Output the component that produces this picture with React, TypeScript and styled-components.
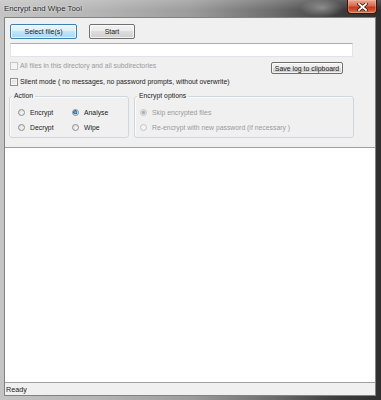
import React from "react";
import styled, { createGlobalStyle } from "styled-components";

const GlobalStyle = createGlobalStyle`
  html, body { margin: 0; padding: 0; width: 381px; height: 400px; overflow: hidden; background: #2b2b2b; }
  body { font-family: "Liberation Sans", Arial, sans-serif; }
  * { box-sizing: border-box; }
`;

const Window = styled.div`
  width: 381px;
  height: 400px;
  display: flex;
  flex-direction: column;
  padding: 0 5px 4px 4px;
  background:
    radial-gradient(ellipse 22px 9px at 322px 8px, rgba(255,255,255,0.35), rgba(255,255,255,0) 100%),
    linear-gradient(180deg, rgba(255,255,255,0.18) 0px, rgba(255,255,255,0) 10px),
    linear-gradient(90deg, #c4c4c4 0%, #b5b5b5 25%, #9c9c9c 50%, #6c6c6c 72%, #3e3e3e 88%, #2e2e2e 100%);
`;

const TitleBar = styled.div`
  height: 17px;
  display: flex;
  align-items: flex-start;
  justify-content: space-between;
`;

const Title = styled.span`
  margin-top: 4px;
  font-size: 7.8px;
  line-height: 9px;
  color: #151515;
  text-shadow: 0 0 3px rgba(255,255,255,0.85), 0 0 1px rgba(255,255,255,0.9);
`;

const CloseButton = styled.div`
  width: 30px;
  height: 14px;
  margin-right: -1px;
  display: flex;
  align-items: center;
  justify-content: center;
  border: 1px solid #3e1208;
  border-top: none;
  border-radius: 0 0 4px 4px;
  background: linear-gradient(180deg, #e9a996 0%, #d9694c 45%, #c5391c 55%, #cf5a38 85%, #e08b6a 100%);
  box-shadow: inset 0 0 0 1px rgba(255,200,180,0.35);
`;

const Client = styled.div`
  flex: 1;
  display: flex;
  flex-direction: column;
  background: #f0f0f0;
  border: 1px solid rgba(40,40,40,0.55);
`;

const TopPanel = styled.div`
  height: 129px;
  flex-shrink: 0;
  display: flex;
  flex-direction: column;
  padding: 6px 0 0 5px;
  font-size: 6.85px;
`;

const ButtonRow = styled.div`
  display: flex;
  gap: 12px;
`;

const PushButton = styled.button<{ $w: number; $h: number; $default?: boolean; $top?: number }>`
  width: ${(p) => p.$w}px;
  height: ${(p) => p.$h}px;
  margin-top: ${(p) => p.$top ?? 0}px;
  padding: 0;
  font-family: "Liberation Sans", Arial, sans-serif;
  font-size: 6.9px;
  color: #1a1a1a;
  border-radius: 2px;
  border: 1px solid ${(p) => (p.$default ? "#3c7fb1" : "#707070")};
  background: ${(p) =>
    p.$default
      ? "linear-gradient(180deg, #eaf6fd 0%, #d9f0fc 50%, #bee6fd 50%, #a7d9f5 100%)"
      : "linear-gradient(180deg, #f2f2f2 0%, #ebebeb 50%, #dddddd 50%, #cfcfcf 100%)"};
  box-shadow: inset 0 0 0 1px rgba(255,255,255,0.7);
  align-self: flex-start;
`;

const PathInput = styled.input`
  width: 343px;
  height: 14px;
  margin: 4px 0 0 0;
  padding: 0 2px;
  background: #fff;
  border: 1px solid #e2e3ea;
  border-top-color: #abadb3;
  outline: none;
  font-size: 6.85px;
`;

const OptionRow = styled.div`
  width: 333px;
  height: 13px;
  margin-top: 4px;
  display: flex;
  justify-content: space-between;
  align-items: flex-start;
`;

const CheckLabel = styled.label<{ $disabled?: boolean; $top?: number }>`
  display: flex;
  align-items: center;
  gap: 2px;
  height: 9px;
  margin-top: ${(p) => p.$top ?? 0}px;
  line-height: 9px;
  font-size: 6.85px;
  color: ${(p) => (p.$disabled ? "#9a9a9a" : "#1a1a1a")};
  white-space: nowrap;
`;

const CheckBox = styled.span<{ $disabled?: boolean }>`
  width: 8px;
  height: 8px;
  flex-shrink: 0;
  border: 1px solid ${(p) => (p.$disabled ? "#c6c6c6" : "#8e8f8f")};
  background: ${(p) =>
    p.$disabled ? "#f4f4f4" : "linear-gradient(135deg, #dcdcdc 0%, #f4f4f4 100%)"};
  box-shadow: inset 0 0 0 1px ${(p) => (p.$disabled ? "#f4f4f4" : "#f6f6f6")};
`;

const GroupRow = styled.div`
  display: flex;
  gap: 5px;
  margin: 5px 0 0 -1px;
`;

const Group = styled.fieldset<{ $w: number }>`
  width: ${(p) => p.$w}px;
  height: 47px;
  margin: 0;
  padding: 4px 0 0 0;
  min-width: 0;
  border: 1px solid #d0d7dc;
  border-radius: 3px;
  box-shadow: inset 1px 1px 0 #fbfbfb;
`;

const Legend = styled.legend`
  padding: 0 2px;
  margin-left: 2px;
  font-size: 6.85px;
  line-height: 10px;
  color: #1a1a1a;
`;

const RadioGrid = styled.div<{ $cols: string; $pad: number }>`
  display: grid;
  grid-template-columns: ${(p) => p.$cols};
  grid-auto-rows: 15px;
  align-items: center;
  padding-left: ${(p) => p.$pad}px;
`;

const RadioLabel = styled.label<{ $disabled?: boolean }>`
  display: flex;
  align-items: center;
  gap: 5px;
  font-size: 6.85px;
  line-height: 9px;
  white-space: nowrap;
  color: ${(p) => (p.$disabled ? "#9a9a9a" : "#1a1a1a")};
`;

const RadioDot = styled.span<{ $checked?: boolean; $disabled?: boolean }>`
  width: 7px;
  height: 7px;
  flex-shrink: 0;
  border-radius: 50%;
  border: 1px solid ${(p) => (p.$disabled ? "#c4c4c4" : "#8e8f8f")};
  background: ${(p) =>
    p.$checked
      ? p.$disabled
        ? "radial-gradient(circle at 50% 50%, #a9a9a9 0, #b8b8b8 1.6px, #ececec 2.2px)"
        : "radial-gradient(circle at 45% 45%, #7fc4ef 0, #1f6fb5 1.8px, #e8e8e8 2.4px)"
      : p.$disabled
      ? "#f3f3f3"
      : "radial-gradient(circle at 65% 65%, #f6f6f6 0, #d8d8d8 100%)"};
`;

const LogArea = styled.div`
  flex: 1;
  background: #fff;
  border-top: 1px solid #a0a0a0;
`;

const StatusBar = styled.div`
  height: 13px;
  flex-shrink: 0;
  border-top: 1px solid #a0a0a0;
  padding: 1px 0 0 1px;
  font-size: 7.2px;
  line-height: 11px;
  color: #1a1a1a;
`;

function CloseGlyph() {
  return (
    <svg width="11" height="8" viewBox="0 0 11 8">
      <path d="M2 1 L9 7 M9 1 L2 7" stroke="#3a1a12" strokeWidth="3.4" strokeLinecap="square" />
      <path d="M2 1 L9 7 M9 1 L2 7" stroke="#ffffff" strokeWidth="1.8" strokeLinecap="square" />
    </svg>
  );
}

export default function App() {
  return (
    <>
      <GlobalStyle />
      <Window>
        <TitleBar>
          <Title>Encrypt and Wipe Tool</Title>
          <CloseButton>
            <CloseGlyph />
          </CloseButton>
        </TitleBar>
        <Client>
          <TopPanel>
            <ButtonRow>
              <PushButton $w={67} $h={15} $default>
                Select file(s)
              </PushButton>
              <PushButton $w={46} $h={15}>
                Start
              </PushButton>
            </ButtonRow>
            <PathInput type="text" defaultValue="" />
            <OptionRow>
              <CheckLabel $disabled>
                <CheckBox $disabled />
                All files in this directory and all subdirectories
              </CheckLabel>
              <PushButton $w={72} $h={12} $top={1}>
                Save log to clipboard
              </PushButton>
            </OptionRow>
            <CheckLabel $top={3}>
              <CheckBox />
              Silent mode ( no messages, no password prompts, without overwrite)
            </CheckLabel>
            <GroupRow>
              <Group $w={120}>
                <Legend>Action</Legend>
                <RadioGrid $cols="54px 50px" $pad={8}>
                  <RadioLabel>
                    <RadioDot />
                    Encrypt
                  </RadioLabel>
                  <RadioLabel>
                    <RadioDot $checked />
                    Analyse
                  </RadioLabel>
                  <RadioLabel>
                    <RadioDot />
                    Decrypt
                  </RadioLabel>
                  <RadioLabel>
                    <RadioDot />
                    Wipe
                  </RadioLabel>
                </RadioGrid>
              </Group>
              <Group $w={220}>
                <Legend>Encrypt options</Legend>
                <RadioGrid $cols="1fr" $pad={5}>
                  <RadioLabel $disabled>
                    <RadioDot $checked $disabled />
                    Skip encrypted files
                  </RadioLabel>
                  <RadioLabel $disabled>
                    <RadioDot $disabled />
                    Re-encrypt with new password (if necessary )
                  </RadioLabel>
                </RadioGrid>
              </Group>
            </GroupRow>
          </TopPanel>
          <LogArea />
          <StatusBar>Ready</StatusBar>
        </Client>
      </Window>
    </>
  );
}
